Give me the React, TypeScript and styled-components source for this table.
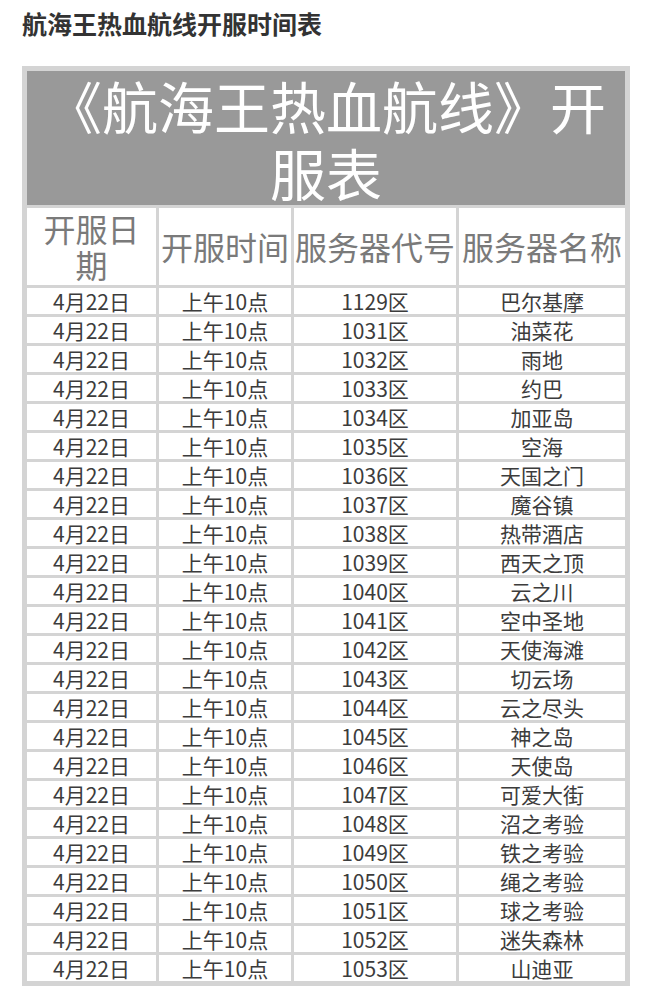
import React from "react";
import styled, { createGlobalStyle } from "styled-components";

const servers: [string, string][] = [
  ["1129", "巴尔基摩"],
  ["1031", "油菜花"],
  ["1032", "雨地"],
  ["1033", "约巴"],
  ["1034", "加亚岛"],
  ["1035", "空海"],
  ["1036", "天国之门"],
  ["1037", "魔谷镇"],
  ["1038", "热带酒店"],
  ["1039", "西天之顶"],
  ["1040", "云之川"],
  ["1041", "空中圣地"],
  ["1042", "天使海滩"],
  ["1043", "切云场"],
  ["1044", "云之尽头"],
  ["1045", "神之岛"],
  ["1046", "天使岛"],
  ["1047", "可爱大街"],
  ["1048", "沼之考验"],
  ["1049", "铁之考验"],
  ["1050", "绳之考验"],
  ["1051", "球之考验"],
  ["1052", "迷失森林"],
  ["1053", "山迪亚"],
];

const GlobalStyle = createGlobalStyle`
  html, body {
    margin: 0;
    padding: 0;
    background: #ffffff;
  }
  body {
    font-family: "Noto Sans CJK SC", "Noto Sans", sans-serif;
  }
`;

const Page = styled.div`
  padding: 9px 21px 0 22px;
`;

const Heading = styled.h1`
  margin: 0 0 29px;
  font-size: 25px;
  line-height: 28px;
  font-weight: 700;
  color: #333333;
`;

const Table = styled.table`
  width: 607px;
  table-layout: fixed;
  border-collapse: separate;
  border-spacing: 3px;
  border: 2px solid #d4d4d4;
  background: #d4d4d4;
`;

const TitleCell = styled.td`
  background: #999999;
  color: #ffffff;
  font-size: 56px;
  line-height: 67px;
  text-align: center;
  padding: 0;
`;

const HeadCell = styled.td<{ $wrap?: boolean }>`
  background: #ffffff;
  color: #7a7a7a;
  font-size: 32px;
  line-height: 36px;
  text-align: center;
  vertical-align: middle;
  padding: ${(p) => (p.$wrap ? "2px 4px 3px" : "2px 0 3px")};
  white-space: ${(p) => (p.$wrap ? "normal" : "nowrap")};
`;

const Cell = styled.td`
  background: #ffffff;
  color: #3c3c3c;
  font-size: 21px;
  line-height: 26px;
  text-align: center;
  padding: 0;
  white-space: nowrap;
`;

export default function App() {
  return (
    <>
      <GlobalStyle />
      <Page>
        <Heading>航海王热血航线开服时间表</Heading>
        <Table>
          <colgroup>
            <col style={{ width: 129 }} />
            <col style={{ width: 132 }} />
            <col style={{ width: 162 }} />
            <col style={{ width: 166 }} />
          </colgroup>
          <tbody>
            <tr>
              <TitleCell colSpan={4}>《航海王热血航线》开服表</TitleCell>
            </tr>
            <tr>
              <HeadCell $wrap>开服日期</HeadCell>
              <HeadCell>开服时间</HeadCell>
              <HeadCell>服务器代号</HeadCell>
              <HeadCell>服务器名称</HeadCell>
            </tr>
            {servers.map(([code, name]) => (
              <tr key={code}>
                <Cell>4月22日</Cell>
                <Cell>上午10点</Cell>
                <Cell>{code}区</Cell>
                <Cell>{name}</Cell>
              </tr>
            ))}
          </tbody>
        </Table>
      </Page>
    </>
  );
}
